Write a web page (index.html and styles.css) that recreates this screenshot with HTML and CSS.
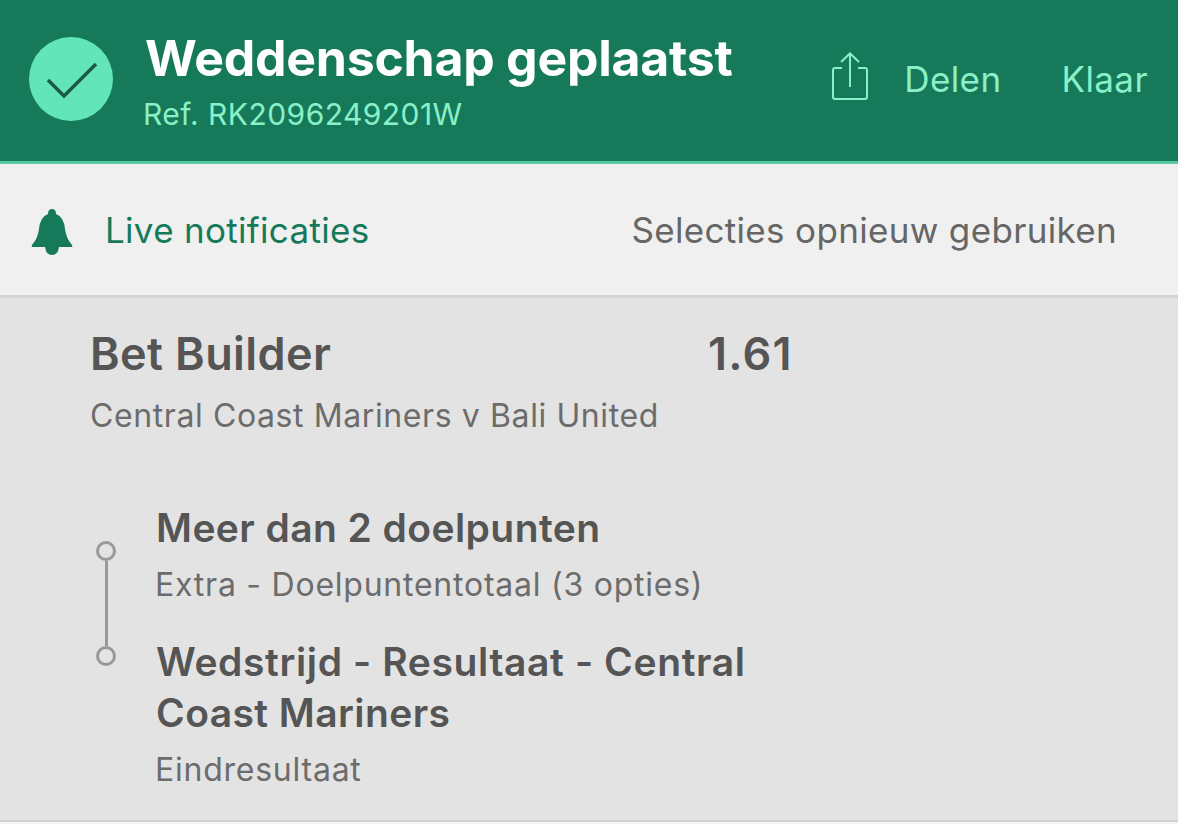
FILE: index.html
```html
<!DOCTYPE html>
<html lang="en">
<head>
    <meta charset="UTF-8">
    <meta name="viewport" content="width=device-width, initial-scale=1.0">
    <title>Weddenschap geplaatst</title>
    <link rel="stylesheet" href="styles.css">
</head>
<body>
    <header class="top-bar">
        <div class="check-circle">
            <svg width="54" height="40" viewBox="0 0 54 40"><path d="M4 21 L20 37 L52 5" fill="none" stroke="#1c5a48" stroke-width="3.6"/></svg>
        </div>
        <div class="top-text">
            <h1>Weddenschap geplaatst</h1>
            <p>Ref. RK2096249201W</p>
        </div>
        <div class="share-icon">
            <svg width="38" height="50" viewBox="0 0 38 50"><path d="M11 16 H4 Q2 16 2 18 V45 Q2 47 4 47 H34 Q36 47 36 45 V18 Q36 16 34 16 H27 M19 35 V2 M10 10 L19 1.500 L28 10" fill="none" stroke="#8af0c8" stroke-width="2"/></svg>
        </div>
        <span class="top-link delen">Delen</span>
        <span class="top-link">Klaar</span>
    </header>

    <div class="action-bar">
        <svg class="bell" width="42" height="48" viewBox="0 0 42 48"><path d="M21 1 Q25 1 25 6 Q33 9 34 21 Q35 30 41 37 Q42 39 40 39 H28 Q27 47 21 47 Q15 47 14 39 H2 Q0 39 1 37 Q7 30 8 21 Q9 9 17 6 Q17 1 21 1 Z" fill="#167a5a"/></svg>
        <span class="live">Live notificaties</span>
        <span class="reuse">Selecties opnieuw gebruiken</span>
    </div>

    <main class="bet">
        <div class="bet-head">
            <h2>Bet Builder</h2>
            <span class="odds">1.61</span>
        </div>
        <p class="match">Central Coast Mariners v Bali United</p>

        <div class="legs">
            <div class="timeline">
                <span class="dot"></span>
                <span class="line"></span>
                <span class="dot"></span>
            </div>
            <div class="leg-list">
                <div class="leg">
                    <h3>Meer dan 2 doelpunten</h3>
                    <p>Extra - Doelpuntentotaal (3 opties)</p>
                </div>
                <div class="leg">
                    <h3><span class="wide">Wedstrijd - Resultaat - Central</span><br>Coast Mariners</h3>
                    <p>Eindresultaat</p>
                </div>
            </div>
        </div>
    </main>
</body>
</html>
```

FILE: styles.css
```css
html, body {
    height: 100%;
}
body {
    margin: 0;
    font-family: Inter, "Liberation Sans", sans-serif;
    background-color: #f4f4f4;
    display: flex;
    flex-direction: column;
    overflow: hidden;
}
h1, h2, h3, p {
    margin: 0;
}

/* green header */
.top-bar {
    height: 157px;
    flex: none;
    background-color: #167a5a;
    border-bottom: 3px solid #5cc9a3;
    display: flex;
    align-items: center;
    padding: 0 30px 4px 29px;
}
.check-circle {
    width: 84px;
    height: 84px;
    border-radius: 50%;
    background-color: #62e5b8;
    display: flex;
    align-items: center;
    justify-content: center;
    flex: none;
}
.top-text {
    margin-left: 32px;
    padding-top: 4px;
    flex: 1;
}
.top-text h1 {
    font-size: 50px;
    line-height: 56px;
    font-weight: 700;
    letter-spacing: -0.25px;
    color: #fff;
}
.top-text p {
    font-size: 30px;
    line-height: 36px;
    margin-top: 10px;
    letter-spacing: 0.45px;
    margin-left: -2px;
    color: #8af0c8;
}
.share-icon {
    display: flex;
    margin: 0 35px 4px 0;
}
.top-link {
    font-size: 35px;
    letter-spacing: 0.4px;
    color: #8af0c8;
}
.delen {
    margin-right: 60px;
}

/* notifications row */
.action-bar {
    height: 131px;
    flex: none;
    background-color: #f0f0f0;
    border-bottom: 3px solid #d4d4d4;
    display: flex;
    align-items: center;
    padding: 0 61px 0 31px;
}
.bell {
    flex: none;
    margin-top: 4px;
}
.live {
    margin-left: 32px;
    font-size: 35px;
    letter-spacing: 0.3px;
    color: #167a5a;
    flex: 1;
}
.reuse {
    font-size: 35px;
    letter-spacing: 0.33px;
    color: #666;
}

/* bet details */
.bet {
    height: 524px;
    flex: none;
    background-color: #e3e3e3;
    border-bottom: 2px solid #d2d2d2;
    padding: 28px 0 0 90px;
    box-sizing: border-box;
    color: #555;
}
.bet-head {
    display: flex;
    font-size: 45px;
    line-height: 56px;
    font-weight: 600;
}
.bet-head h2 {
    font-size: inherit;
    font-weight: 600;
    width: 618px;
    letter-spacing: 0.4px;
}
.odds {
    letter-spacing: 1.2px;
}
.match {
    font-size: 32px;
    line-height: 36px;
    margin-top: 16px;
    letter-spacing: 0.6px;
    color: #6c6c6c;
}
.legs {
    display: flex;
    margin-top: 68px;
}
.timeline {
    width: 66px;
    flex: none;
    display: flex;
    flex-direction: column;
    align-items: flex-start;
    padding: 39px 0 0 6px;
    box-sizing: border-box;
}
.dot {
    width: 20px;
    height: 20px;
    box-sizing: border-box;
    border: 3px solid #999;
    border-radius: 50%;
}
.line {
    width: 3px;
    height: 85px;
    margin-left: 9px;
    background-color: #999;
}
.leg {
    margin-bottom: 33px;
}
.leg h3 {
    font-size: 39px;
    line-height: 51px;
    font-weight: 600;
    letter-spacing: 0.42px;
}
.wide {
    letter-spacing: 0.62px;
}
.leg p {
    font-size: 32px;
    line-height: 36px;
    margin: 14px 0 0 -1px;
    letter-spacing: 0.76px;
    color: #6c6c6c;
}
```
